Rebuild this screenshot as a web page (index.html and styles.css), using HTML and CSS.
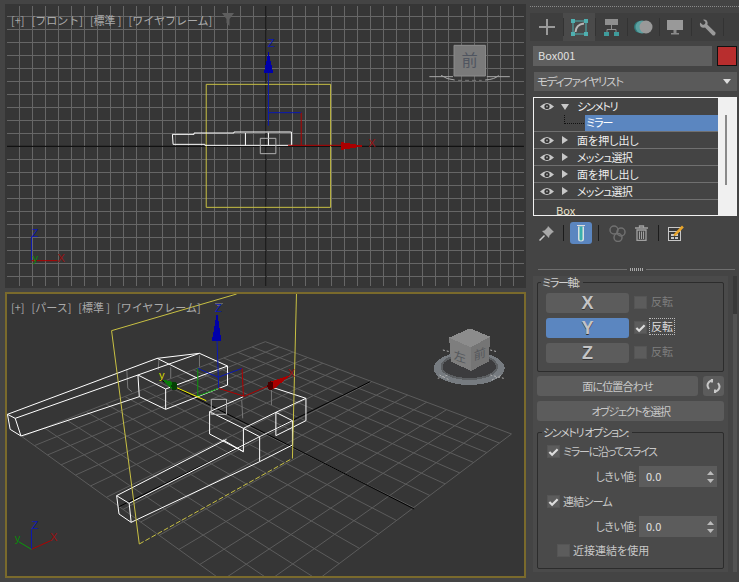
FILE: index.html
```html
<!DOCTYPE html>
<html lang="ja">
<head>
  <meta charset="UTF-8">
  <title>シンメトリ</title>
  <link rel="stylesheet" href="styles.css">
</head>
<body>
  <svg class="defs" width="0" height="0">
    <symbol id="eye" viewBox="0 0 14 9">
      <path d="M0 4.5Q7-2.5 14 4.5Q7 11.5 0 4.5Z" fill="#c8c8c8"/>
      <circle cx="7" cy="4.5" r="2.6" fill="#333"/>
      <circle cx="7" cy="4.5" r="1" fill="#999"/>
    </symbol>
    <symbol id="tick" viewBox="0 0 12 10">
      <path d="M1.5 5L4.5 8L10.5 2" fill="none" stroke="#ddd" stroke-width="2.4"/>
    </symbol>
    <symbol id="arrows" viewBox="0 0 7 12">
      <path d="M3.5 0L7 4H0ZM3.5 12L0 8H7Z" fill="#bbb"/>
    </symbol>
  </svg>

  <div class="views">
    <div class="view view-front">
      <div class="view-label">[+] [フロント] [標準&#8201;] [ワイヤフレーム]<svg class="filter" width="12" height="13" viewBox="0 0 12 13"><path d="M0 0H12L7.5 6V13L4.5 10V6Z" fill="#5e5e5e"/></svg></div>
      <svg class="scene" viewBox="20.7 18 1529.3 840" preserveAspectRatio="none">
        <line class="axis" x1="20" y1="439" x2="1550" y2="439"/>
        <line class="axis" x1="787" y1="18" x2="787" y2="858"/>
        <rect class="plane" x="610" y="253" width="368" height="369"/>
        <path class="wire" d="M510 403H574V399H692V396H862V436H606V433H512ZM726 399V436M794 398V436"/>
        <rect class="pivot" x="770" y="415" width="46" height="46"/>
        <path class="b" d="M794 218V377M794 338H891"/>
        <path class="r" d="M891 338V436M852 436H1012"/>
        <path class="bf" d="M794 154L808 218H781Z"/>
        <path class="rf" d="M1010 426L1080 438L1010 450Z"/>
        <text class="t-b" x="792" y="140">Z</text>
        <text class="t-r" x="1089" y="440">X</text>
        <path class="b" d="M93 782V710"/>
        <path class="r" d="M93 782H170"/>
        <text class="t-b" x="93" y="710">Z</text>
        <text class="t-r" x="170" y="786">X</text>
        <text class="t-g" x="96" y="786">y</text>
        <rect class="cube-face" x="1343" y="136" width="93" height="92"/>
        <text class="cube-text" x="1389" y="197" text-anchor="middle">前</text>
        <path class="cube-ring" d="M1270 230H1340M1305 226Q1320 238 1345 240M1435 240Q1465 238 1475 226M1440 230H1508"/>
        <path class="cube-shade" d="M1355 241H1425"/>
      </svg>
    </div>

    <div class="view view-persp">
      <div class="view-label">[+] [パース] [標準&#8201;] [ワイヤフレーム]</div>
      <svg class="scene" viewBox="20.7 12 1529.3 846" preserveAspectRatio="none">
        <g id="floor"></g>
        <line class="axis" x1="1095" y1="275" x2="352" y2="650"/>
        <line class="axis" x1="475" y1="270" x2="1225" y2="657"/>
        <path class="hidden-wire" d="M375 238L378 295L390 305M470 210L468 240M505 232V265M590 195V230M803 300V345M715 330L718 385"/>
        <path class="wire" d="M22 373L465 205L590 190L673 228L490 297L408 255L590 190M465 205L585 265M408 255L412 320L490 358L673 285V228M490 297V358M412 320L62 438L30 418L22 373L45 385L408 255M45 385L62 438"/>
        <path class="wire" d="M720 320L620 365L720 415L816 367L905 325L800 290M905 325V392L816 437V367L865 392V465L768 515V440L865 392M720 415V485L620 432V365M720 415L768 440L382 640L345 617L670 448M720 485L660 450M345 617L352 672L388 697L768 515M382 640L388 697"/>
        <path class="plane-line" d="M865 505L877 12M700 12L330 122L412 762"/>
        <path class="plane-line plane-dots" d="M412 762L865 505"/>
        <rect class="pivot" x="625" y="328" width="45" height="45"/>
        <path class="g" d="M585 235V318L647 295"/>
        <path class="b" d="M642 152L647 295M645 262L585 235M645 262L716 235"/>
        <path class="r" d="M716 235L720 318L647 295M720 320L800 285"/>
        <path class="y" d="M520 292L610 332"/>
        <path class="bf" d="M642 65L655 152H627Z"/>
        <path class="cap" d="M632 38H664L648 50Z"/>
        <path class="rf" d="M860 255L810 297L790 278Z"/>
        <ellipse class="dark-r" cx="800" cy="287" rx="9" ry="13"/>
        <path class="gf" d="M478 268L522 278L510 298Z"/>
        <ellipse class="dark-g" cx="516" cy="288" rx="9" ry="13"/>
        <text class="t-b" x="636" y="66">Z</text>
        <text class="t-r" x="851" y="262">X</text>
        <text class="t-y" x="470" y="266">y</text>
        <path class="b" d="M93 778V718"/>
        <path class="r" d="M93 778L150 752"/>
        <path class="g" d="M93 778L55 755"/>
        <text class="t-b" x="93" y="716">Z</text>
        <text class="t-r" x="148" y="754">X</text>
        <text class="t-g" x="44" y="756">y</text>
        <ellipse class="nav-ring" cx="1388" cy="235" rx="105" ry="50"/>
        <ellipse class="nav-hole" cx="1388" cy="230" rx="82" ry="37"/>
        <path class="nav-top" d="M1390 115L1450 140L1393 172L1328 143Z"/>
        <path class="nav-left" d="M1328 143L1393 172V243L1335 215Z"/>
        <path class="nav-right" d="M1450 140L1445 215L1393 243V172Z"/>
        <text class="nav-text" transform="translate(1342 208) skewY(18)">左</text>
        <text class="nav-text" transform="translate(1401 212) skewY(-22)">前</text>
        <path class="nav-dots" d="M1295 265L1325 255M1300 255L1330 270M1450 255L1490 265M1455 270L1485 255M1450 180L1470 185M1310 180L1330 185"/>
      </svg>
    </div>
  </div>

  <div class="side">
    <div class="dots-strip"></div>
    <div class="tabs">
      <div class="tab">
        <svg width="16" height="16" viewBox="0 0 16 16"><path d="M8 0V16M0 8H16" stroke="#9a9a9a" stroke-width="2"/></svg>
      </div>
      <div class="tab tab-active">
        <svg width="17" height="17" viewBox="0 0 17 17"><rect x="2" y="2" width="13" height="13" fill="none" stroke="#4fb0b0"/><path d="M0 0h4v4H0zM13 0h4v4h-4zM0 13h4v4H0zM13 13h4v4h-4z" fill="#4fb0b0"/><path d="M4.5 13Q5 5.5 13 4.5" fill="none" stroke="#b8b8b8" stroke-width="2"/></svg>
      </div>
      <div class="tab">
        <svg width="15" height="17" viewBox="0 0 15 17"><rect x="1" y="0" width="13" height="6" fill="#8f8f8f"/><path d="M7.500 6V11M3 14V10.500H12V14" fill="none" stroke="#8f8f8f"/><path d="M0 13h5v4H0zM10 13h5v4h-5z" fill="#3f9c9c"/></svg>
      </div>
      <div class="tab">
        <svg width="19" height="14" viewBox="0 0 19 14"><circle cx="6" cy="7" r="6" fill="#2f7a7a"/><circle cx="8" cy="7" r="6.500" fill="#5ba0a0"/><circle cx="12" cy="7" r="6.500" fill="#999"/></svg>
      </div>
      <div class="tab">
        <svg width="16" height="15" viewBox="0 0 16 15"><rect width="16" height="10" fill="#999"/><path d="M6.500 10h3v3h-3zM4 13h8v1.500H4z" fill="#8a8a8a"/></svg>
      </div>
      <div class="tab">
        <svg width="17" height="17" viewBox="0 0 17 17"><path d="M1 3.500L4 6L6 5L6.500 3L4 .7Q7.500 0 8.500 3Q8.800 4.500 8.300 5.500L16.500 13.500Q17 15 15.500 16.500L13.800 16.500L6 8.500Q3.500 9.500 1.700 7.700Q.5 6 1 3.500Z" fill="#9a9a9a"/></svg>
      </div>
      <div class="tab tab-end"></div>
    </div>

    <div class="name-row">
      <div class="name-field">Box001</div>
      <div class="swatch"></div>
    </div>
    <div class="mod-select">
      <span>モディファイヤリスト</span>
      <span class="caret"></span>
    </div>

    <div class="stack">
      <div class="stack-list">
        <div class="stack-row stack-open">
          <svg class="eye"><use href="#eye"/></svg>
          <span class="tri tri-down"></span>
          <span class="kana-tight">シンメトリ</span>
        </div>
        <div class="stack-row stack-sub">
          <span class="tree-line"></span>
          <span class="stack-sel">ミラー</span>
        </div>
        <div class="stack-row">
          <svg class="eye"><use href="#eye"/></svg>
          <span class="tri"></span>
          <span>面を押し出し</span>
        </div>
        <div class="stack-row">
          <svg class="eye"><use href="#eye"/></svg>
          <span class="tri"></span>
          <span class="kana">メッシュ選択</span>
        </div>
        <div class="stack-row">
          <svg class="eye"><use href="#eye"/></svg>
          <span class="tri"></span>
          <span>面を押し出し</span>
        </div>
        <div class="stack-row">
          <svg class="eye"><use href="#eye"/></svg>
          <span class="tri"></span>
          <span class="kana">メッシュ選択</span>
        </div>
        <div class="stack-base">Box</div>
      </div>
      <div class="stack-scroll"><div class="stack-thumb"></div></div>
    </div>

    <div class="toolbar">
      <span class="tool">
        <svg width="15" height="15" viewBox="0 0 15 15"><path d="M9 0L15 6L13.500 6.500L10.500 9.500L10 12L3 5L5.500 4.500L8.500 1.500Z" fill="#a8a8a8"/><path d="M5.500 9.500L.5 14.500" stroke="#c8c8c8" stroke-width="1.500"/></svg>
      </span>
      <span class="tool-sep"></span>
      <span class="tool tool-on">
        <svg width="8" height="17" viewBox="0 0 8 17"><path d="M0 .5H8" stroke="#ddd"/><path d="M1 1.500H7V14Q7 16.500 4 16.500Q1 16.500 1 14Z" fill="#d8e0e0"/><path d="M2.500 1.500H5.500V14Q5.500 15.500 4 15.500Q2.500 15.500 2.500 14Z" fill="#39b0ac"/></svg>
      </span>
      <span class="tool-sep"></span>
      <span class="tool tool-instance">
        <svg width="17" height="17" viewBox="0 0 17 17" fill="none" stroke="#707070" stroke-width="1.500"><circle cx="5" cy="5" r="4"/><circle cx="12" cy="7" r="4"/><circle cx="9" cy="12.500" r="4"/></svg>
      </span>
      <span class="tool tool-trash">
        <svg width="13" height="16" viewBox="0 0 13 16"><path d="M0 3H13M4.500 3V1H8.500V3" fill="none" stroke="#a0a0a0" stroke-width="1.300"/><path d="M2 5H11V15.500H2Z" fill="none" stroke="#a0a0a0" stroke-width="1.300"/><path d="M4.500 6.500V14M6.500 6.500V14M8.500 6.500V14" stroke="#a0a0a0"/></svg>
      </span>
      <span class="tool-sep"></span>
      <span class="tool">
        <svg width="16" height="16" viewBox="0 0 16 16"><rect x=".5" y="2.500" width="12" height="13" fill="#3a3a3a" stroke="#c8c8c8"/><path d="M1 6H12V7H1zM3 9h3v2H3zM7 9h3v2H7zM3 12h3v2H3zM7 12h3v2H7z" fill="#c8c8c8"/><path d="M6 9L14 .5L15.800 2.500L8 10.500L5.500 11Z" fill="#e9a52a"/></svg>
      </span>
    </div>

    <div class="roll-rule"><span class="rule-line"></span><span class="rule-dots"></span><span class="rule-line"></span></div>

    <div class="roll">
      <div class="roll-body">
        <fieldset class="group group-axis">
          <legend>ミラー軸:</legend>
          <div class="axis-row">
            <div class="axis-btn">X</div>
            <span class="check"></span>
            <span class="check-label muted">反転</span>
          </div>
          <div class="axis-row">
            <div class="axis-btn axis-on">Y</div>
            <span class="check"><svg width="12" height="10"><use href="#tick"/></svg></span>
            <span class="check-label focus">反転</span>
          </div>
          <div class="axis-row">
            <div class="axis-btn">Z</div>
            <span class="check"></span>
            <span class="check-label muted">反転</span>
          </div>
        </fieldset>

        <div class="btn-row">
          <div class="btn btn-grow">面に位置合わせ</div>
          <div class="btn btn-icon">
            <svg width="15" height="14" viewBox="0 0 15 14" fill="none" stroke="#c8c8c8" stroke-width="2"><path d="M3 10Q0 6 3 3Q5 1 7 1.200M12 4Q15 8 12 11Q10 13 8 12.800"/><path d="M6 0V3.500M9 14V10.500"/></svg>
          </div>
        </div>
        <div class="btn btn-wide"><span class="kana-tight">オブジェクトを選択</span></div>

        <fieldset class="group group-opts">
          <legend>シンメトリ オプション:</legend>
          <div class="opt">
            <span class="check"><svg width="12" height="10"><use href="#tick"/></svg></span>
            <span class="kana-tight">ミラーに沿ってスライス</span>
          </div>
          <div class="spin-row">
            <span class="spin-label">しきい値:</span>
            <div class="spinner"><span>0.0</span><svg width="7" height="12"><use href="#arrows"/></svg></div>
          </div>
          <div class="opt opt-2">
            <span class="check"><svg width="12" height="10"><use href="#tick"/></svg></span>
            <span class="kana">連結シーム</span>
          </div>
          <div class="spin-row">
            <span class="spin-label">しきい値:</span>
            <div class="spinner"><span>0.0</span><svg width="7" height="12"><use href="#arrows"/></svg></div>
          </div>
          <div class="opt opt-3">
            <span class="check"></span>
            <span>近接連結を使用</span>
          </div>
        </fieldset>
      </div>
      <div class="roll-scroll"><div class="roll-thumb"></div></div>
    </div>
  </div>

  <script src="grid.js"></script>
</body>
</html>
```

FILE: styles.css
```css
* {
  box-sizing: border-box;
}
html, body {
  height: 100%;
}
body {
  margin: 0;
  width: 739px;
  height: 582px;
  overflow: hidden;
  display: flex;
  background: #444;
  color: #d0d0d0;
  font-family: "Noto Sans CJK JP", "Noto Sans", sans-serif;
  font-size: 11px;
  font-feature-settings: "palt";
  line-height: 1;
}
.defs {
  position: absolute;
}
.kana {
  letter-spacing: -.8px;
}
.kana-tight {
  letter-spacing: -1.3px;
}

/* viewports */
.views {
  width: 530px;
  padding: 4px 4px 4px 5px;
  display: flex;
  flex-direction: column;
  gap: 4px;
}
.view {
  position: relative;
  background-color: #363636;
  border: 2px solid #363636;
}
.view-front {
  height: 284px;
  background-image:
    linear-gradient(#666 1px, transparent 1px),
    linear-gradient(90deg, #666 1px, transparent 1px);
  background-size: 13px 13px;
  background-position: 0 10px, 12px 0;
  background-origin: padding-box;
}
.view-persp {
  height: 286px;
  border-color: #7a6a2c;
}
.scene {
  display: block;
  width: 100%;
  height: 100%;
}
.view-label {
  position: absolute;
  left: 4px;
  top: 7px;
  color: #aaa;
  font-size: 11px;
  font-feature-settings: normal;
  white-space: nowrap;
  word-spacing: 4.5px;
  z-index: 1;
}
.view-persp .view-label {
  top: 8px;
}
.filter {
  margin-left: 10px;
  vertical-align: -1px;
}

.scene line, .scene path, .scene rect, .scene ellipse {
  vector-effect: non-scaling-stroke;
  shape-rendering: crispEdges;
}
.scene text {
  font-family: "Liberation Sans", sans-serif;
  font-size: 33px;
}
.axis { stroke: #000; stroke-width: 1; }
.wire { fill: none; stroke: #fff; stroke-width: 1; }
.hidden-wire { fill: none; stroke: #777; stroke-width: 1; }
.plane { fill: none; stroke: #c8c043; stroke-width: 1; }
.plane-line { fill: none; stroke: #c8c043; stroke-width: 1; }
.plane-dots { stroke-dasharray: 5 2; }
.pivot { fill: none; stroke: #b0b0b0; stroke-width: 1; }
.b { fill: none; stroke: #0a18b4; stroke-width: 1; }
.r { fill: none; stroke: #b00000; stroke-width: 1; }
.g { fill: none; stroke: #0a9a0a; stroke-width: 1; }
.y { fill: none; stroke: #f0f000; stroke-width: 1; }
.bf { fill: #0000aa; }
.rf { fill: #aa0000; }
.gf { fill: #0a7a0a; }
.dark-r { fill: #4a0000; }
.dark-g { fill: #053f05; }
.cap { fill: #666; }
.t-b { fill: #0a18b4; }
.t-r { fill: #9a1010; }
.t-g { fill: #0a8a0a; }
.t-y { fill: #d8d800; }
.cube-face { fill: #7a7a7a; stroke: #8c8c8c; stroke-width: 1; }
.scene .cube-text { font-family: "Noto Sans CJK JP", sans-serif; font-size: 48px; fill: #505560; }
.cube-ring { fill: none; stroke: #a8a8a8; stroke-width: 1; }
.cube-shade { fill: none; stroke: #777; stroke-width: 1; stroke-dasharray: 4 3; }
.floor-line { stroke: #5c5c5c; stroke-width: 1; vector-effect: non-scaling-stroke; shape-rendering: crispEdges; }
.nav-ring { fill: #767b80; }
.nav-hole { fill: #3c3c3e; stroke: #5c5f62; stroke-width: 2; }
.nav-top { fill: #8c8c8c; }
.nav-left { fill: #7e7e7e; }
.nav-right { fill: #757575; }
.scene .nav-text { font-family: "Noto Sans CJK JP", sans-serif; font-size: 36px; fill: #55585c; }
.nav-dots { fill: none; stroke: #b0b0b0; stroke-width: 1; stroke-dasharray: 2 2; }

/* command panel */
.side {
  width: 209px;
  display: flex;
  flex-direction: column;
}
.dots-strip {
  height: 13px;
  padding-top: 6px;
  background-image: linear-gradient(90deg, #8a8a8a 1px, transparent 1px);
  background-size: 2px 1px;
  background-repeat: repeat-x;
  background-position: 0 6px;
}
.tabs {
  height: 28px;
  padding-left: 1px;
  display: flex;
  background: #3e3e3e;
}
.tab {
  width: 32px;
  display: flex;
  align-items: center;
  justify-content: center;
  position: relative;
}
.tab + .tab::before {
  content: "";
  position: absolute;
  left: 0;
  top: 5px;
  bottom: 5px;
  width: 1px;
  background: #333;
}
.tab-active {
  background: #4a4a4a;
}
.tab-end {
  flex: 1;
}
.name-row {
  margin: 5px 2px 0 3px;
  display: flex;
  gap: 5px;
}
.name-field {
  flex: 1;
  height: 20px;
  padding: 4px 5px;
  background: #5f5f5f;
  font-size: 11px;
  color: #e0e0e0;
}
.swatch {
  width: 20px;
  height: 20px;
  background: #b82e2e;
  border: 1px solid #111;
}
.mod-select {
  margin: 6px 2px 0 4px;
  height: 19px;
  padding: 0 6px 0 3px;
  display: flex;
  align-items: center;
  justify-content: space-between;
  background: #5a5a5a;
  color: #ccc;
  font-size: 11.500px;
  letter-spacing: -1.200px;
}
.caret {
  width: 0;
  height: 0;
  border-left: 4px solid transparent;
  border-right: 4px solid transparent;
  border-top: 5px solid #ddd;
}
.stack {
  margin: 6px 2px 0 3px;
  height: 119px;
  display: flex;
  border: 1px solid #f2f2f2;
  background: #f0f0f0;
}
.stack-list {
  width: 184px;
  background: #444;
}
.stack-row {
  height: 17px;
  padding-left: 6px;
  display: flex;
  align-items: center;
  color: #eee;
  font-size: 11px;
  border-bottom: 1px solid #707070;
}
.stack-open {
  border-bottom: 0;
}
.eye {
  width: 14px;
  height: 9px;
}
.tri {
  margin: 0 9px 0 8px;
  width: 0;
  height: 0;
  border-top: 4px solid transparent;
  border-bottom: 4px solid transparent;
  border-left: 6px solid #c8c8c8;
}
.tri-down {
  margin: 0 8px 0 7px;
  border-left: 4px solid transparent;
  border-right: 4px solid transparent;
  border-top: 6px solid #c8c8c8;
  border-bottom: 0;
}
.stack-sub {
  padding-left: 0;
  align-items: stretch;
}
.tree-line {
  margin: 0 1px 0 30px;
  width: 20px;
  height: 9px;
  border-left: 1px dotted #111;
  border-bottom: 1px dotted #111;
}
.stack-sel {
  flex: 1;
  padding: 2px 0 0 1px;
  background: #5b86c0;
  color: #fff;
  font-size: 11px;
  letter-spacing: -1px;
}
.stack-base {
  padding: 5px 0 0 22px;
  color: #e8e0c8;
}
.stack-scroll {
  flex: 1;
  padding: 17px 0 0 7px;
}
.stack-thumb {
  width: 2px;
  height: 70px;
  background: #8a8a8a;
}
.toolbar {
  margin-top: 6px;
  height: 22px;
  padding-left: 5px;
  display: flex;
  align-items: center;
}
.tool {
  width: 22px;
  height: 22px;
  display: flex;
  align-items: center;
  justify-content: center;
  border-radius: 3px;
}
.tool-on {
  background: #5b86c0;
}
.tool-instance {
  margin-left: 1px;
}
.tool-trash {
  margin-left: 2px;
}
.tool-sep {
  width: 1px;
  height: 16px;
  margin: 0 6px;
  background: #1c1c1c;
}
.roll-rule {
  margin: 25px 4px 0 8px;
  height: 1px;
  display: flex;
  align-items: center;
  gap: 3px;
}
.rule-line {
  flex: 1;
  height: 1px;
  background: #6e6e6e;
}
.rule-dots {
  width: 13px;
  height: 3px;
  background-image: linear-gradient(90deg, #aaa 1px, transparent 1px);
  background-size: 2px 1px;
}
.roll {
  margin: 6px 2px 0 3px;
  height: 296px;
  display: flex;
  gap: 5px;
}
.roll-body {
  flex: 1;
  padding: 0 4px;
  background: #4a4a4a;
  color: #c8c8c8;
}
.roll-scroll {
  width: 4px;
  background: #383838;
  padding-top: 38px;
}
.roll-thumb {
  height: 258px;
  background: #525252;
}
.group {
  margin: 0;
  padding: 0 0 0 8px;
  min-width: 0;
  border: 1px solid #2c2c2c;
  border-radius: 2px;
}
.group legend {
  padding: 0 4px 0 1px;
  color: #d0d0d0;
  font-size: 11px;
  line-height: 13px;
  letter-spacing: -1.300px;
}
.group-axis {
  height: 96px;
  margin-top: 0;
  padding-top: 4px;
}
.group-axis legend {
  margin-left: -5px;
}
.axis-row {
  height: 25px;
  display: flex;
  align-items: flex-start;
}
.axis-btn {
  width: 83px;
  height: 20px;
  display: flex;
  align-items: center;
  justify-content: center;
  border-radius: 3px;
  background: #5c5c5c;
  color: #c4c4c4;
  font-family: "Liberation Sans", sans-serif;
  font-size: 18px;
  font-weight: bold;
  text-shadow: 0 1px 0 #333;
}
.axis-on {
  background: #5b86c0;
}
.check {
  flex: none;
  width: 13px;
  height: 13px;
  display: flex;
  align-items: center;
  justify-content: center;
  background: #5c5c5c;
  border: 1px solid #555;
}
.axis-row .check {
  margin: 3px 3px 0 5px;
}
.check-label {
  padding: 3px 1px;
  margin-top: 0;
  color: #ddd;
}
.muted {
  color: #7e7e7e;
}
.focus {
  border: 1px dotted #bbb;
  margin: 0 0 0 -1px;
  padding: 2px 1px;
}
.btn {
  height: 20px;
  display: flex;
  align-items: center;
  justify-content: center;
  border-radius: 3px;
  background: #5c5c5c;
  color: #c8c8c8;
}
.btn-row {
  margin-top: 4px;
  display: flex;
  gap: 5px;
}
.btn-grow {
  flex: 1;
  letter-spacing: -.8px;
}
.btn-icon {
  width: 21px;
}
.btn-wide {
  margin-top: 5px;
}
.group-opts {
  margin-top: 5px;
  height: 143px;
  padding: 6px 6px 0 9px;
}
.group-opts legend {
  margin-left: -5px;
}
.opt {
  display: flex;
  align-items: center;
  gap: 3px;
  height: 13px;
}
.opt-2 {
  margin-top: 8px;
}
.opt-3 {
  margin: 7px 0 0 10px;
}
.spin-row {
  margin-top: 8px;
  height: 21px;
  display: flex;
  align-items: center;
  justify-content: flex-end;
  gap: 3px;
}
.spin-label {
  letter-spacing: -.6px;
}
.spinner {
  width: 78px;
  height: 21px;
  padding: 0 3px 0 7px;
  display: flex;
  align-items: center;
  justify-content: space-between;
  background: #5c5c5c;
  color: #e0e0e0;
}
```

FILE: grid.js
```js
// perspective floor grid: corners are back, right, front, left in scene units
const corners = [[785, 155], [1513, 432], [800, 976], [65, 440]];
const cells = 14;

function project(u, v) {
  const [p0, p1, p2, p3] = corners;
  const dx1 = p1[0] - p2[0], dx2 = p3[0] - p2[0], sx = p0[0] - p1[0] + p2[0] - p3[0];
  const dy1 = p1[1] - p2[1], dy2 = p3[1] - p2[1], sy = p0[1] - p1[1] + p2[1] - p3[1];
  const det = dx1 * dy2 - dx2 * dy1;
  const g = (sx * dy2 - dx2 * sy) / det;
  const h = (dx1 * sy - sx * dy1) / det;
  const w = g * u + h * v + 1;
  const x = (p1[0] - p0[0] + g * p1[0]) * u + (p3[0] - p0[0] + h * p3[0]) * v + p0[0];
  const y = (p1[1] - p0[1] + g * p1[1]) * u + (p3[1] - p0[1] + h * p3[1]) * v + p0[1];
  return [x / w, y / w];
}

const floor = document.getElementById("floor");

function addLine(a, b) {
  const line = document.createElementNS("http://www.w3.org/2000/svg", "line");
  line.setAttribute("x1", a[0]);
  line.setAttribute("y1", a[1]);
  line.setAttribute("x2", b[0]);
  line.setAttribute("y2", b[1]);
  line.setAttribute("class", "floor-line");
  floor.appendChild(line);
}

for (let i = 0; i <= cells; i++) {
  addLine(project(i / cells, 0), project(i / cells, 1));
  addLine(project(0, i / cells), project(1, i / cells));
}
```
